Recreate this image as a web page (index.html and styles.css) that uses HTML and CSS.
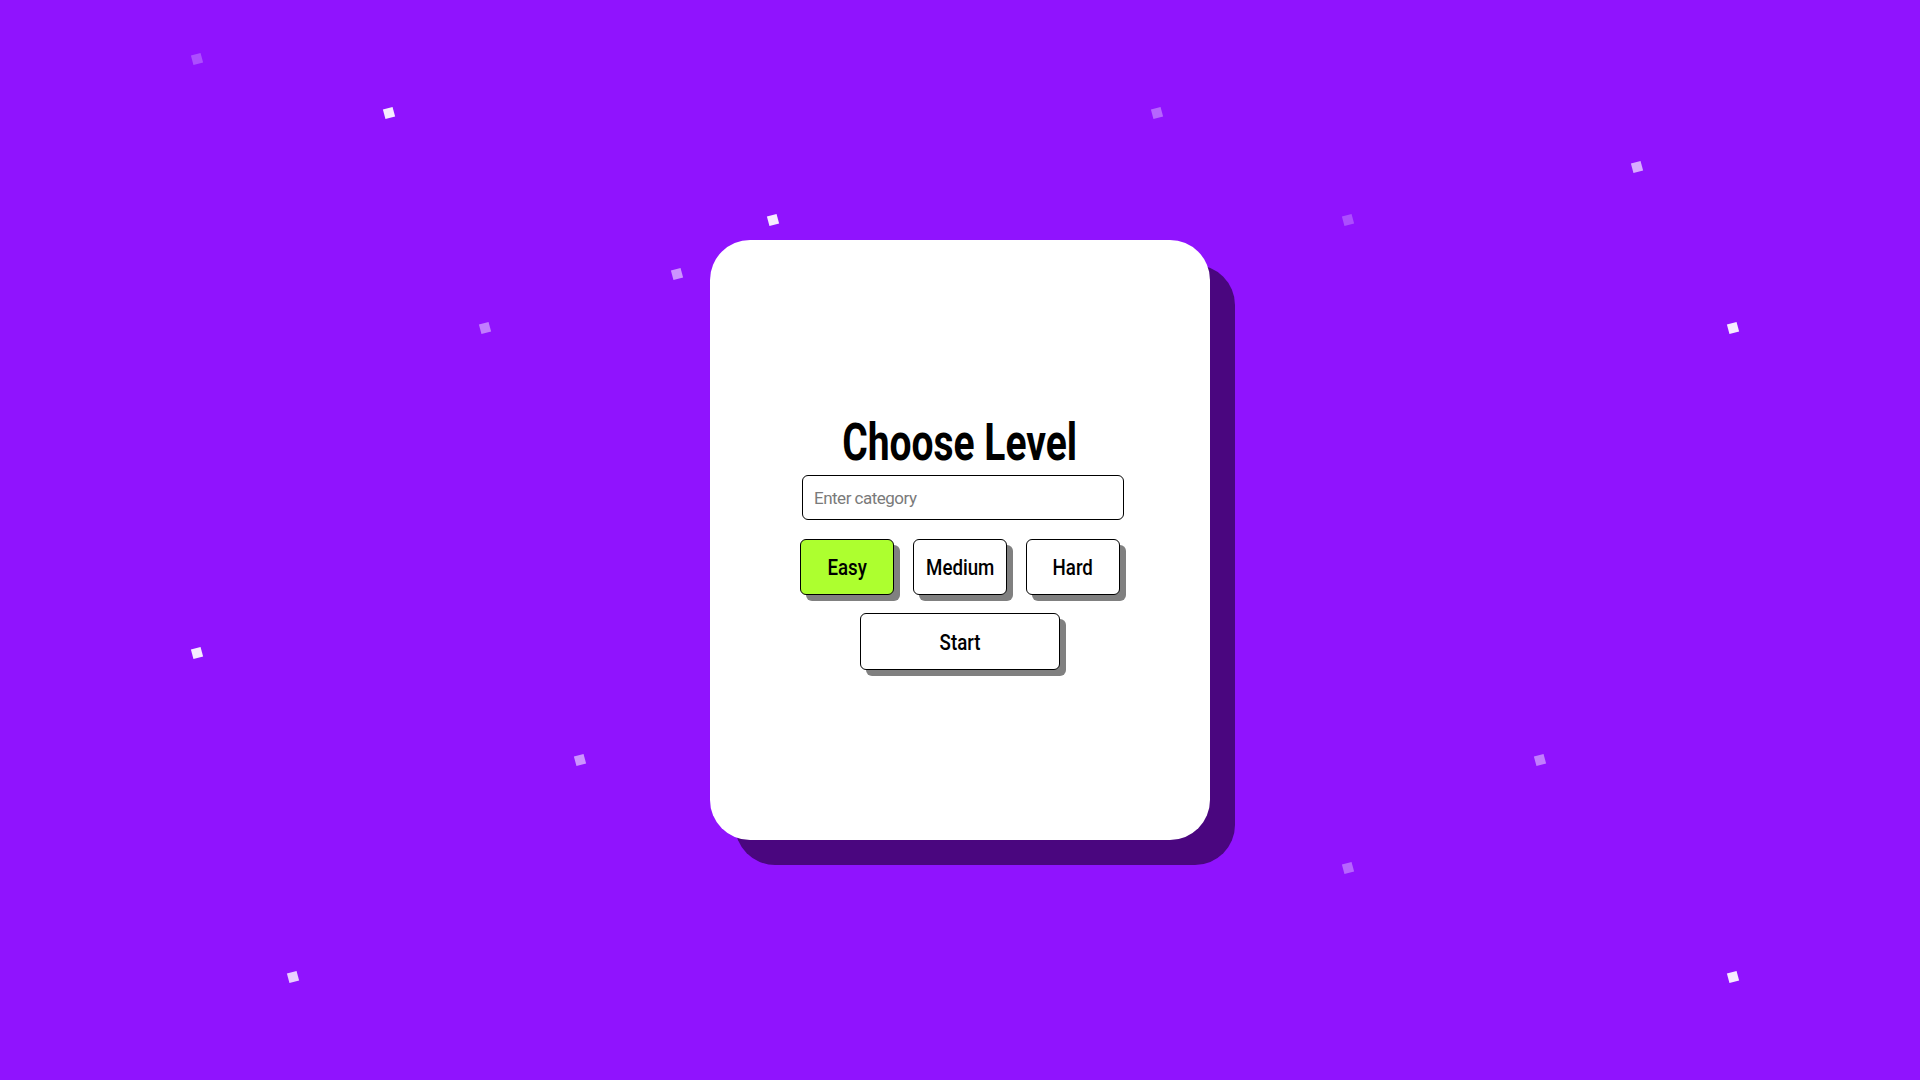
FILE: index.html
```html
<!DOCTYPE html>
<html lang="en">
<head>
<meta charset="utf-8">
<title>Choose Level</title>
<link rel="stylesheet" href="styles.css">
</head>
<body>
<div class="particles">
  <span class="p o3" style="left:192px;top:54px"></span>
  <span class="p o9" style="left:384px;top:108px"></span>
  <span class="p o9" style="left:768px;top:215px"></span>
  <span class="p o6" style="left:672px;top:269px"></span>
  <span class="p o5" style="left:480px;top:323px"></span>
  <span class="p o4" style="left:1152px;top:108px"></span>
  <span class="p o3" style="left:1343px;top:215px"></span>
  <span class="p o7" style="left:1632px;top:162px"></span>
  <span class="p o9" style="left:1728px;top:323px"></span>
  <span class="p o9" style="left:192px;top:648px"></span>
  <span class="p o6" style="left:575px;top:755px"></span>
  <span class="p o8" style="left:288px;top:972px"></span>
  <span class="p o5" style="left:1535px;top:755px"></span>
  <span class="p o4" style="left:1343px;top:863px"></span>
  <span class="p o9" style="left:1728px;top:972px"></span>
</div>
<main class="card">
  <h1 class="title"><span class="narrow">Choose Level</span></h1>
  <input class="category" type="text" placeholder="Enter category">
  <div class="levels">
    <button class="btn level active"><span class="narrow">Easy</span></button>
    <button class="btn level"><span class="narrow">Medium</span></button>
    <button class="btn level"><span class="narrow">Hard</span></button>
  </div>
  <button class="btn start"><span class="narrow">Start</span></button>
</main>
</body>
</html>
```

FILE: styles.css
```css
* { box-sizing: border-box; }

html, body {
  margin: 0;
  height: 100%;
}

body {
  background: #9013fe;
  font-family: Roboto, "Liberation Sans", sans-serif;
  display: flex;
  align-items: center;
  justify-content: center;
  overflow: hidden;
  position: relative;
}

.particles {
  position: absolute;
  inset: 0;
  pointer-events: none;
}

.p {
  position: absolute;
  width: 10px;
  height: 10px;
  background: #fff;
  transform: rotate(-15deg);
}
.o3 { opacity: 0.25; }
.o4 { opacity: 0.35; }
.o5 { opacity: 0.45; }
.o6 { opacity: 0.55; }
.o7 { opacity: 0.65; }
.o8 { opacity: 0.8; }
.o9 { opacity: 0.92; }

.card {
  position: relative;
  width: 500px;
  height: 600px;
  background: #fff;
  border-radius: 40px;
  box-shadow: 25px 25px 0 #4a067f;
  display: flex;
  flex-direction: column;
  align-items: center;
  justify-content: center;
}

.narrow {
  display: inline-block;
  transform: scaleX(0.85);
}

.title {
  margin: 7px 0 7px;
  font-size: 52px;
  line-height: 50px;
  font-weight: 700;
  color: #000;
}
.title .narrow { transform: scaleX(0.75); }

.category {
  width: 322px;
  height: 45px;
  margin-left: 6px;
  border: 1px solid #000;
  border-radius: 6px;
  padding: 1px 11px 0;
  font-family: inherit;
  font-size: 17px;
  letter-spacing: -0.5px;
  outline: none;
  margin-bottom: 19px;
}
.category::placeholder { color: #7a7a7a; }

.levels {
  display: flex;
  gap: 19px;
  margin-bottom: 18px;
}

.btn {
  font-family: inherit;
  font-size: 22px;
  font-weight: 500;
  color: #000;
  background: #fff;
  border: 1px solid #000;
  border-radius: 6px;
  box-shadow: 6px 6px 0 #808080;
  cursor: pointer;
  padding: 2px 0 0;
}

.level {
  width: 94px;
  height: 56px;
}

.level.active { background: #adff2f; }

.start {
  width: 200px;
  height: 57px;
}
```
